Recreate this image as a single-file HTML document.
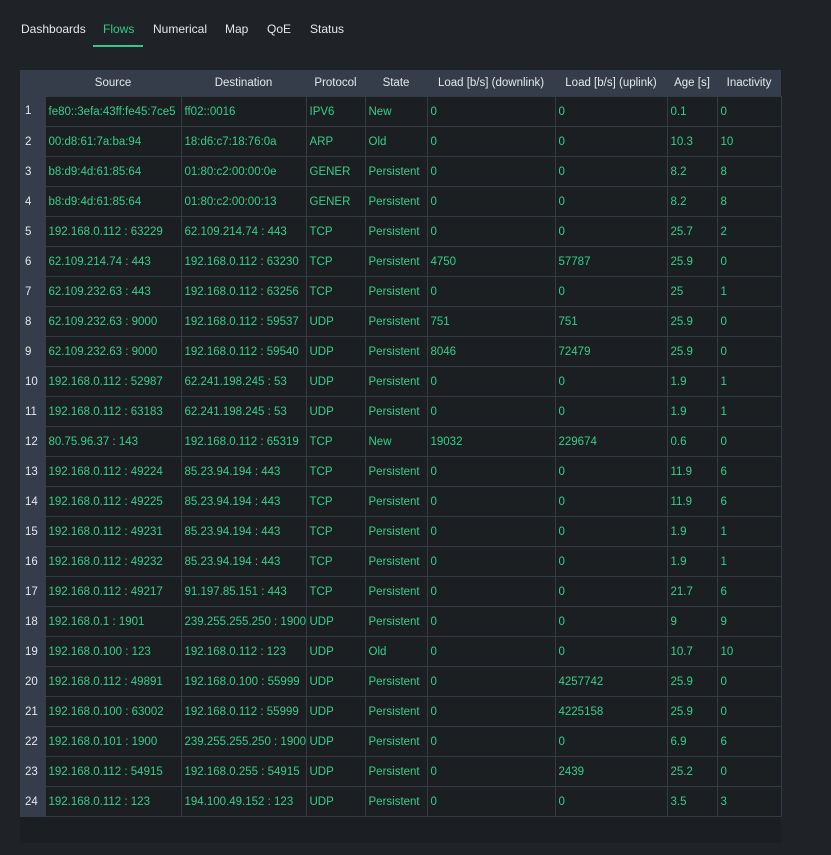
<!DOCTYPE html>
<html><head><style>
body{margin:0;width:831px;height:855px;background:#1f2327;font-family:"Liberation Sans",sans-serif;font-size:12px;color:#e6e8ea;overflow:hidden;position:relative}
.tabs{position:absolute;top:22px;left:21px;height:26px}
.tab{position:absolute;top:0;white-space:nowrap;font-size:12px}
.ul{position:absolute;left:93px;top:45px;width:50px;height:2px;background:#2ecc8a}
.panel{position:absolute;left:20px;top:70px;width:761px;height:773px;background:#1b1f22}
table{position:absolute;left:20px;top:70px;width:761px;border-collapse:collapse;table-layout:fixed}
th{background:#353d4a;height:26px;font-weight:normal;color:#e6e8ea;padding:0;font-size:11.5px;white-space:nowrap;overflow:hidden}
td{height:29px;border:1px solid #343b45;color:#35d08a;padding:0 0 0 3px;white-space:nowrap;overflow:hidden;font-size:11.5px}
td.i{background:#353d4a;color:#e6e8ea;border:none;border-bottom:1px solid #353d4a;padding-left:5px}
</style></head><body>
<div class="tabs">
<span class="tab" style="left:0">Dashboards</span>
<span class="tab" style="left:82px;color:#2ecc8a">Flows</span>
<span class="tab" style="left:132px">Numerical</span>
<span class="tab" style="left:204px">Map</span>
<span class="tab" style="left:246px">QoE</span>
<span class="tab" style="left:289px">Status</span>
</div>
<div class="ul"></div>
<div class="panel"></div>
<table>
<colgroup><col style="width:25px"><col style="width:136px"><col style="width:125px"><col style="width:59px"><col style="width:62px"><col style="width:128px"><col style="width:112px"><col style="width:50px"><col style="width:64px"></colgroup>
<tr><th></th><th>Source</th><th>Destination</th><th>Protocol</th><th>State</th><th>Load [b/s] (downlink)</th><th>Load [b/s] (uplink)</th><th>Age [s]</th><th>Inactivity</th></tr>
<tr><td class="i">1</td><td>fe80::3efa:43ff:fe45:7ce5</td><td>ff02::0016</td><td>IPV6</td><td>New</td><td>0</td><td>0</td><td>0.1</td><td>0</td></tr>
<tr><td class="i">2</td><td>00:d8:61:7a:ba:94</td><td>18:d6:c7:18:76:0a</td><td>ARP</td><td>Old</td><td>0</td><td>0</td><td>10.3</td><td>10</td></tr>
<tr><td class="i">3</td><td>b8:d9:4d:61:85:64</td><td>01:80:c2:00:00:0e</td><td>GENER</td><td>Persistent</td><td>0</td><td>0</td><td>8.2</td><td>8</td></tr>
<tr><td class="i">4</td><td>b8:d9:4d:61:85:64</td><td>01:80:c2:00:00:13</td><td>GENER</td><td>Persistent</td><td>0</td><td>0</td><td>8.2</td><td>8</td></tr>
<tr><td class="i">5</td><td>192.168.0.112 : 63229</td><td>62.109.214.74 : 443</td><td>TCP</td><td>Persistent</td><td>0</td><td>0</td><td>25.7</td><td>2</td></tr>
<tr><td class="i">6</td><td>62.109.214.74 : 443</td><td>192.168.0.112 : 63230</td><td>TCP</td><td>Persistent</td><td>4750</td><td>57787</td><td>25.9</td><td>0</td></tr>
<tr><td class="i">7</td><td>62.109.232.63 : 443</td><td>192.168.0.112 : 63256</td><td>TCP</td><td>Persistent</td><td>0</td><td>0</td><td>25</td><td>1</td></tr>
<tr><td class="i">8</td><td>62.109.232.63 : 9000</td><td>192.168.0.112 : 59537</td><td>UDP</td><td>Persistent</td><td>751</td><td>751</td><td>25.9</td><td>0</td></tr>
<tr><td class="i">9</td><td>62.109.232.63 : 9000</td><td>192.168.0.112 : 59540</td><td>UDP</td><td>Persistent</td><td>8046</td><td>72479</td><td>25.9</td><td>0</td></tr>
<tr><td class="i">10</td><td>192.168.0.112 : 52987</td><td>62.241.198.245 : 53</td><td>UDP</td><td>Persistent</td><td>0</td><td>0</td><td>1.9</td><td>1</td></tr>
<tr><td class="i">11</td><td>192.168.0.112 : 63183</td><td>62.241.198.245 : 53</td><td>UDP</td><td>Persistent</td><td>0</td><td>0</td><td>1.9</td><td>1</td></tr>
<tr><td class="i">12</td><td>80.75.96.37 : 143</td><td>192.168.0.112 : 65319</td><td>TCP</td><td>New</td><td>19032</td><td>229674</td><td>0.6</td><td>0</td></tr>
<tr><td class="i">13</td><td>192.168.0.112 : 49224</td><td>85.23.94.194 : 443</td><td>TCP</td><td>Persistent</td><td>0</td><td>0</td><td>11.9</td><td>6</td></tr>
<tr><td class="i">14</td><td>192.168.0.112 : 49225</td><td>85.23.94.194 : 443</td><td>TCP</td><td>Persistent</td><td>0</td><td>0</td><td>11.9</td><td>6</td></tr>
<tr><td class="i">15</td><td>192.168.0.112 : 49231</td><td>85.23.94.194 : 443</td><td>TCP</td><td>Persistent</td><td>0</td><td>0</td><td>1.9</td><td>1</td></tr>
<tr><td class="i">16</td><td>192.168.0.112 : 49232</td><td>85.23.94.194 : 443</td><td>TCP</td><td>Persistent</td><td>0</td><td>0</td><td>1.9</td><td>1</td></tr>
<tr><td class="i">17</td><td>192.168.0.112 : 49217</td><td>91.197.85.151 : 443</td><td>TCP</td><td>Persistent</td><td>0</td><td>0</td><td>21.7</td><td>6</td></tr>
<tr><td class="i">18</td><td>192.168.0.1 : 1901</td><td>239.255.255.250 : 1900</td><td>UDP</td><td>Persistent</td><td>0</td><td>0</td><td>9</td><td>9</td></tr>
<tr><td class="i">19</td><td>192.168.0.100 : 123</td><td>192.168.0.112 : 123</td><td>UDP</td><td>Old</td><td>0</td><td>0</td><td>10.7</td><td>10</td></tr>
<tr><td class="i">20</td><td>192.168.0.112 : 49891</td><td>192.168.0.100 : 55999</td><td>UDP</td><td>Persistent</td><td>0</td><td>4257742</td><td>25.9</td><td>0</td></tr>
<tr><td class="i">21</td><td>192.168.0.100 : 63002</td><td>192.168.0.112 : 55999</td><td>UDP</td><td>Persistent</td><td>0</td><td>4225158</td><td>25.9</td><td>0</td></tr>
<tr><td class="i">22</td><td>192.168.0.101 : 1900</td><td>239.255.255.250 : 1900</td><td>UDP</td><td>Persistent</td><td>0</td><td>0</td><td>6.9</td><td>6</td></tr>
<tr><td class="i">23</td><td>192.168.0.112 : 54915</td><td>192.168.0.255 : 54915</td><td>UDP</td><td>Persistent</td><td>0</td><td>2439</td><td>25.2</td><td>0</td></tr>
<tr><td class="i">24</td><td>192.168.0.112 : 123</td><td>194.100.49.152 : 123</td><td>UDP</td><td>Persistent</td><td>0</td><td>0</td><td>3.5</td><td>3</td></tr>
</table>
</body></html>
